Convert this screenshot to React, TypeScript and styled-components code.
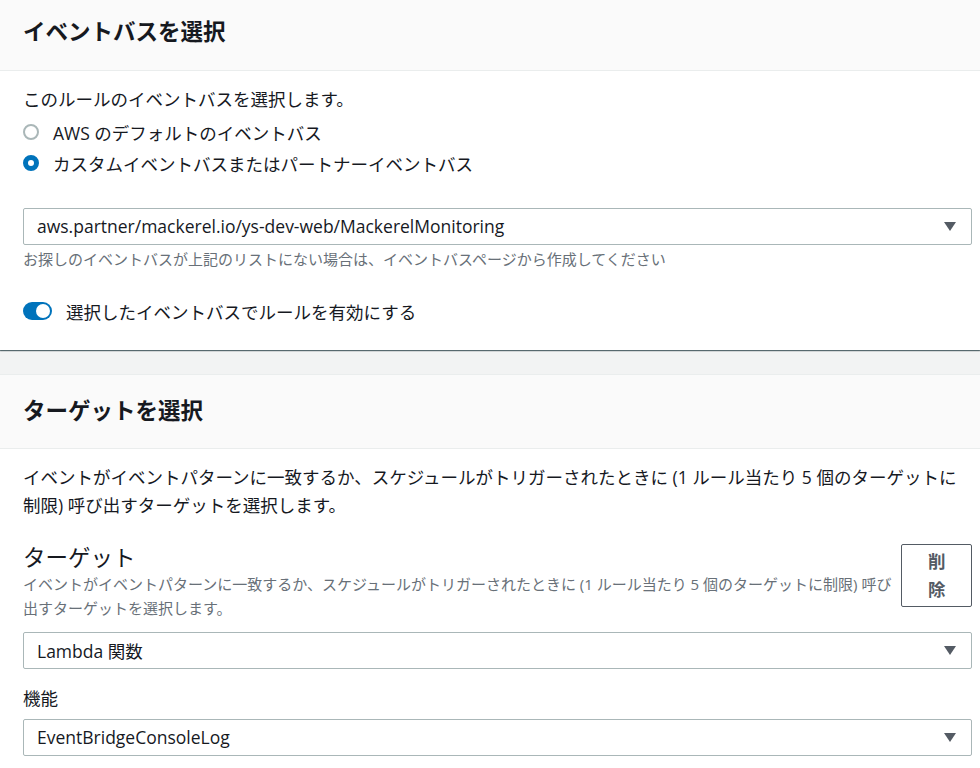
import React from "react";
import styled, { createGlobalStyle } from "styled-components";

const Global = createGlobalStyle`
  html, body {
    margin: 0;
    padding: 0;
    background: #f2f3f3;
  }
  body {
    font-family: "Open Sans", "Noto Sans CJK JP", sans-serif;
    color: #16191f;
    -webkit-font-smoothing: antialiased;
  }
  * { box-sizing: border-box; }
`;

const Page = styled.div`
  display: flex;
  flex-direction: column;
  gap: 24px;
  width: 980px;
`;

const Container = styled.section`
  background: #ffffff;
  box-shadow: 0 1px 1px 0 rgba(0, 28, 36, 0.5), 1px 1px 1px 0 rgba(0, 28, 36, 0.15),
    -1px 1px 1px 0 rgba(0, 28, 36, 0.15);
  & + & {
    border-top: 1px solid #eaeded;
  }
`;

const Header = styled.header<{ $top: number; $bottom: number }>`
  background: #fafafa;
  border-bottom: 1px solid #eaeded;
  padding: ${(p) => p.$top}px 8px ${(p) => p.$bottom}px 23px;
`;

const Title = styled.h2`
  margin: 0;
  font-size: 22.5px;
  line-height: 28px;
  font-weight: 700;
  color: #16191f;
`;

const Body = styled.div<{ $top: number; $bottom: number }>`
  padding: ${(p) => p.$top}px 8px ${(p) => p.$bottom}px 23px;
  display: flex;
  flex-direction: column;
`;

const Text = styled.p<{ $mb?: number }>`
  margin: 0 0 ${(p) => p.$mb ?? 0}px;
  font-size: 17.5px;
  line-height: 27.5px;
  color: #16191f;
`;

const RadioRow = styled.label`
  display: flex;
  align-items: center;
  gap: 14px;
  height: 31px;
  font-size: 17.5px;
  color: #16191f;
`;

const RadioDot = styled.span<{ $checked: boolean }>`
  width: 16px;
  height: 16px;
  border-radius: 50%;
  flex: none;
  background: #ffffff;
  border: ${(p) => (p.$checked ? "5px solid #0073bb" : "2px solid #aab7b8")};
`;

const Select = styled.div<{ $mt: number }>`
  margin-top: ${(p) => p.$mt}px;
  height: 37px;
  border: 1px solid #aab7b8;
  border-radius: 2px;
  background: #ffffff;
  display: flex;
  align-items: center;
  justify-content: space-between;
  padding: 0 15px 0 13px;
  font-size: 17.5px;
  color: #16191f;
`;

const Caret = styled.span`
  width: 0;
  height: 0;
  border-left: 6.5px solid transparent;
  border-right: 6.5px solid transparent;
  border-top: 9px solid #545b64;
`;

const Helper = styled.div<{ $mt?: number; $lh?: number }>`
  margin-top: ${(p) => p.$mt ?? 0}px;
  font-size: 15px;
  line-height: ${(p) => p.$lh ?? 20}px;
  color: #687078;
`;

const ToggleRow = styled.label`
  margin-top: 29px;
  display: flex;
  align-items: center;
  gap: 14px;
  height: 27.5px;
  font-size: 17.5px;
  color: #16191f;
`;

const Toggle = styled.span`
  position: relative;
  width: 29px;
  height: 18px;
  border-radius: 9px;
  background: #0073bb;
  flex: none;
  &::after {
    content: "";
    position: absolute;
    right: 2px;
    top: 2px;
    width: 14px;
    height: 14px;
    border-radius: 50%;
    background: #ffffff;
  }
`;

const FieldHead = styled.div`
  margin-top: 25px;
  display: flex;
  align-items: flex-start;
  gap: 6px;
`;

const FieldText = styled.div`
  flex: 1;
  min-width: 0;
`;

const BigLabel = styled.div`
  font-size: 22.5px;
  line-height: 28px;
  color: #16191f;
`;

const DeleteButton = styled.button`
  flex: none;
  width: 71px;
  padding: 3px 26px;
  border: 1px solid #545b64;
  border-radius: 2px;
  background: #ffffff;
  color: #545b64;
  font-family: inherit;
  font-weight: 700;
  font-size: 17.5px;
  line-height: 27.5px;
  text-align: center;
`;

const Label = styled.div`
  margin-top: 16px;
  font-size: 17.5px;
  line-height: 27.5px;
  color: #16191f;
`;

export default function App() {
  return (
    <>
      <Global />
      <Page>
        <Container>
          <Header $top={18} $bottom={24}>
            <Title>イベントバスを選択</Title>
          </Header>
          <Body $top={15} $bottom={25}>
            <Text $mb={3}>このルールのイベントバスを選択します。</Text>
            <RadioRow>
              <RadioDot $checked={false} />
              AWS のデフォルトのイベントバス
            </RadioRow>
            <RadioRow>
              <RadioDot $checked={true} />
              カスタムイベントバスまたはパートナーイベントバス
            </RadioRow>
            <Select $mt={29}>
              <span>aws.partner/mackerel.io/ys-dev-web/MackerelMonitoring</span>
              <Caret />
            </Select>
            <Helper $mt={4}>
              お探しのイベントバスが上記のリストにない場合は、イベントバスページから作成してください
            </Helper>
            <ToggleRow>
              <Toggle />
              選択したイベントバスでルールを有効にする
            </ToggleRow>
          </Body>
        </Container>
        <Container>
          <Header $top={22} $bottom={23}>
            <Title>ターゲットを選択</Title>
          </Header>
          <Body $top={15} $bottom={12}>
            <Text>
              イベントがイベントパターンに一致するか、スケジュールがトリガーされたときに (1 ルール当たり 5 個のターゲットに制限) 呼び出すターゲットを選択します。
            </Text>
            <FieldHead>
              <FieldText>
                <BigLabel>ターゲット</BigLabel>
                <Helper $lh={24}>
                  イベントがイベントパターンに一致するか、スケジュールがトリガーされたときに (1 ルール当たり 5 個のターゲットに制限) 呼び出すターゲットを選択します。
                </Helper>
              </FieldText>
              <DeleteButton>削除</DeleteButton>
            </FieldHead>
            <Select $mt={12}>
              <span>Lambda 関数</span>
              <Caret />
            </Select>
            <Label>機能</Label>
            <Select $mt={6}>
              <span>EventBridgeConsoleLog</span>
              <Caret />
            </Select>
          </Body>
        </Container>
      </Page>
    </>
  );
}
